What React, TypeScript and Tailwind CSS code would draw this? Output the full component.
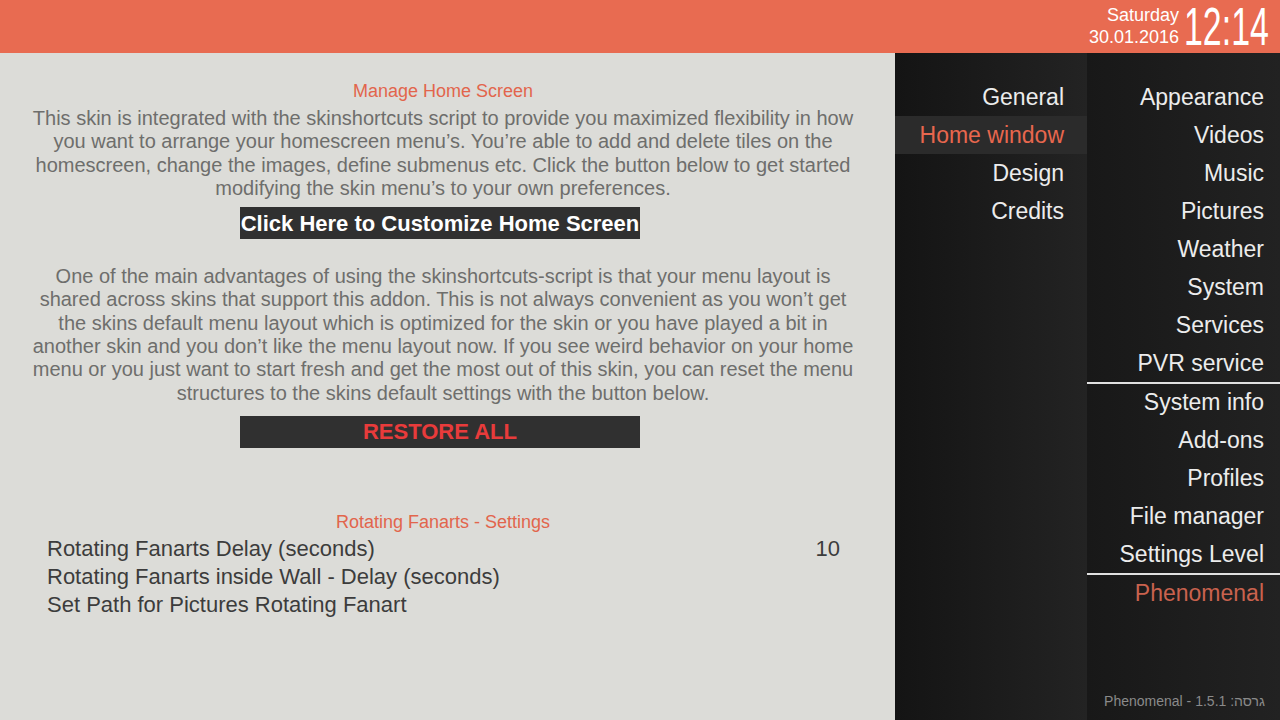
import React from "react";

const SECTIONS = ["General", "Home window", "Design", "Credits"];
const SELECTED_SECTION = "Home window";

const GROUP_A = ["Appearance", "Videos", "Music", "Pictures", "Weather", "System", "Services", "PVR service"];
const GROUP_B = ["System info", "Add-ons", "Profiles", "File manager", "Settings Level"];

const INTRO = [
  "This skin is integrated with the skinshortcuts script to provide you maximized flexibility in how",
  "you want to arrange your homescreen menu’s. You’re able to add and delete tiles on the",
  "homescreen, change the images, define submenus etc. Click the button below to get started",
  "modifying the skin menu’s to your own preferences.",
];

const RESET_INFO = [
  "One of the main advantages of using the skinshortcuts-script is that your menu layout is",
  "shared across skins that support this addon. This is not always convenient as you won’t get",
  "the skins default menu layout which is optimized for the skin or you have played a bit in",
  "another skin and you don’t like the menu layout now. If you see weird behavior on your home",
  "menu or you just want to start fresh and get the most out of this skin, you can reset the menu",
  "structures to the skins default settings with the button below.",
];

const SETTINGS = [
  { label: "Rotating Fanarts Delay (seconds)", value: "10" },
  { label: "Rotating Fanarts inside Wall - Delay (seconds)", value: "" },
  { label: "Set Path for Pictures Rotating Fanart", value: "" },
];

function Header() {
  return (
    <div className="flex h-[53px] items-center justify-end bg-[#e86b51] pr-[10px] shadow-[0_1px_2px_rgba(0,0,0,0.4)]">
      <div className="flex flex-col items-end pb-[1px] text-[18px] leading-[22px] text-white">
        <span>Saturday</span>
        <span>30.01.2016</span>
      </div>
      <div className="ml-[5px] w-[86px]">
        <span className="inline-block origin-left scale-x-[0.64] whitespace-nowrap text-[53px] leading-none text-white">
          12:14
        </span>
      </div>
    </div>
  );
}

function Paragraph({ lines }: { lines: string[] }) {
  return (
    <div className="flex flex-col items-center text-[20px] leading-[23.3px] text-[#6e6e6c]">
      {lines.map((line) => (
        <span key={line} className="whitespace-nowrap">
          {line}
        </span>
      ))}
    </div>
  );
}

function ContentPanel() {
  return (
    <div className="flex w-[895px] flex-col bg-[#dcdcd8]">
      <div className="flex w-[886px] flex-col items-center pt-[27px]">
        <span className="text-[18px] leading-[22px] text-[#e2654c]">Manage Home Screen</span>
        <div className="mt-[5px]">
          <Paragraph lines={INTRO} />
        </div>
        <div className="mr-[6px] mt-[7px] flex h-[32px] w-[400px] items-center justify-center whitespace-nowrap bg-[#303030] text-[22px] font-bold text-white">
          Click Here to Customize Home Screen
        </div>
        <div className="mt-[26px]">
          <Paragraph lines={RESET_INFO} />
        </div>
        <div className="mr-[6px] mt-[11px] flex h-[32px] w-[400px] items-center justify-center bg-[#303030] text-[22px] font-bold text-[#e83b3b]">
          RESTORE ALL
        </div>
        <span className="mt-[63px] text-[18px] leading-[22px] text-[#e2654c]">Rotating Fanarts - Settings</span>
      </div>
      <div className="mt-[2px] flex flex-col pl-[47px] pr-[55px] text-[22px] leading-[28px] text-[#3c3c3c]">
        {SETTINGS.map((item) => (
          <div key={item.label} className="flex justify-between">
            <span>{item.label}</span>
            <span>{item.value}</span>
          </div>
        ))}
      </div>
    </div>
  );
}

function MenuItem({
  label,
  active,
  accent,
  pad,
}: {
  label: string;
  active?: boolean;
  accent?: boolean;
  pad: string;
}) {
  return (
    <div
      className={`flex h-[38px] items-center justify-end text-[23px] ${pad} ${
        active ? "bg-[#2b2b2b] text-[#e8674e]" : accent ? "text-[#c9624e]" : "text-[#ececec]"
      }`}
    >
      {label}
    </div>
  );
}

function SectionColumn() {
  return (
    <div className="flex w-[192px] flex-col bg-gradient-to-r from-[#141414] to-[#232323] pt-[25px]">
      {SECTIONS.map((s) => (
        <MenuItem key={s} label={s} active={s === SELECTED_SECTION} pad="pr-[23px]" />
      ))}
    </div>
  );
}

function CategoryColumn() {
  return (
    <div className="relative flex flex-1 flex-col bg-gradient-to-r from-[#181818] to-[#222222] pt-[25px]">
      {GROUP_A.map((s) => (
        <MenuItem key={s} label={s} pad="pr-[16px]" />
      ))}
      <div className="-mb-[1px] h-[2px] bg-[#e0e0e0]" />
      {GROUP_B.map((s) => (
        <MenuItem key={s} label={s} pad="pr-[16px]" />
      ))}
      <div className="-mb-[1px] h-[2px] bg-[#e0e0e0]" />
      <MenuItem label="Phenomenal" accent pad="pr-[16px]" />
      <div className="absolute bottom-[8px] right-[15px] text-[14px] text-[#8a8a8a]">
        Phenomenal - 1.5.1 :גרסה
      </div>
    </div>
  );
}

export default function App() {
  return (
    <div className="flex h-[720px] w-[1280px] flex-col overflow-hidden bg-[#1b1b1b] font-['Liberation_Sans',Arial,sans-serif]">
      <Header />
      <div className="flex flex-1">
        <ContentPanel />
        <SectionColumn />
        <CategoryColumn />
      </div>
    </div>
  );
}
